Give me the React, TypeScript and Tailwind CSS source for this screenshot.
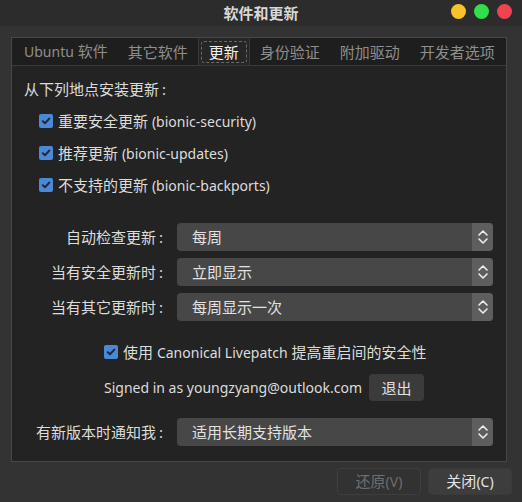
import React from "react";

// Latin runs are a touch smaller than the CJK glyphs in the reference
const L = ({ children }: { children: React.ReactNode }) => <span className="text-[14px]">{children}</span>;

const Check = () => (
    <span className="flex h-[14px] w-[14px] shrink-0 items-center justify-center rounded-[2px] bg-[#4a89d8]">
        <svg width="10" height="10" viewBox="0 0 10 10" fill="none">
            <path d="M1.8 5.2 L4 7.3 L8.3 2.6" stroke="#1f2a38" strokeWidth="2" strokeLinecap="round" strokeLinejoin="round" />
        </svg>
    </span>
);

const Combo = ({ value }: { value: string }) => (
    <div className="flex h-[28px] w-[316px] items-stretch overflow-hidden rounded-[4px] bg-[#474747]">
        <span className="flex flex-1 items-center pl-[15px] text-[#e2e2e2]">{value}</span>
        <span className="flex w-[21px] items-center justify-center bg-[#5e5e5e]">
            <svg width="12" height="20" viewBox="0 0 12 20" fill="none">
                <path d="M2 8 L6 4 L10 8" stroke="#eeeeee" strokeWidth="1.6" strokeLinecap="round" strokeLinejoin="round" />
                <path d="M2 12 L6 16 L10 12" stroke="#eeeeee" strokeWidth="1.6" strokeLinecap="round" strokeLinejoin="round" />
            </svg>
        </span>
    </div>
);

const Row = ({ label, value }: { label: string; value: string }) => (
    <div className="flex items-center gap-[14px]">
        <span className="w-[139px] text-right text-[#dcdcdc]">{label}<span className="pl-[3px]">:</span></span>
        <Combo value={value} />
    </div>
);

const tabs: { key: string; node: React.ReactNode }[] = [
    { key: "ubuntu", node: <span><L>Ubuntu</L> 软件</span> },
    { key: "other", node: "其它软件" },
    { key: "updates", node: "更新" },
    { key: "auth", node: "身份验证" },
    { key: "drivers", node: "附加驱动" },
    { key: "dev", node: "开发者选项" },
];

const sources = [
    ["重要安全更新", "(bionic-security)"],
    ["推荐更新", "(bionic-updates)"],
    ["不支持的更新", "(bionic-backports)"],
];

export default function App() {
    return (
        <div className="flex h-[502px] w-[522px] flex-col bg-[#333333] font-['Noto_Sans','Noto_Sans_CJK_SC',sans-serif] text-[15px] leading-[18px] text-[#dcdcdc]">
            {/* title bar */}
            <div className="relative flex h-[26px] shrink-0 items-center justify-center bg-[#2c2c2c]">
                <span className="text-[15px] font-bold text-[#d8d8d8]">软件和更新</span>
                <div className="absolute right-[10px] top-[4px] flex gap-[8px]">
                    <span className="h-[15px] w-[15px] rounded-full bg-[#f8c22d]" />
                    <span className="h-[15px] w-[15px] rounded-full bg-[#31de4b]" />
                    <span className="h-[15px] w-[15px] rounded-full bg-[#ef444f]" />
                </div>
            </div>

            {/* notebook */}
            <div className="mx-[11px] mt-[11px] flex h-[425px] w-[496px] flex-col border border-[#474747] bg-[#232323]">
                <div className="flex h-[28px] shrink-0 items-stretch overflow-hidden whitespace-nowrap border-b border-[#3a3a3a] bg-[#1e1e1e] pl-[2px]">
                    {tabs.map((t) =>
                        t.key === "updates" ? (
                            <div key={t.key} className="-mb-px flex shrink-0 items-center border-x border-[#3a3a3a] bg-[#262626] px-[2px]">
                                <span className="rounded-[3px] border border-dashed border-[#6a6a6a] px-[7px] leading-[20px] text-[#f0f0f0]">{t.node}</span>
                            </div>
                        ) : (
                            <div key={t.key} className="flex shrink-0 items-center px-[10px] text-[#8e8e8e]">{t.node}</div>
                        )
                    )}
                </div>

                <div className="flex flex-col px-[12px] pt-[14px]">
                    <div className="h-[18px]">从下列地点安装更新<span className="pl-[3px]">:</span></div>
                    <div className="mt-[14px] flex flex-col gap-[14px] pl-[15px]">
                        {sources.map(([zh, en]) => (
                            <div key={en} className="flex h-[18px] items-center gap-[5px]">
                                <Check />
                                <span>{zh} <L>{en}</L></span>
                            </div>
                        ))}
                    </div>

                    <div className="mt-[29px] flex flex-col gap-[7px]">
                        <Row label="自动检查更新" value="每周" />
                        <Row label="当有安全更新时" value="立即显示" />
                        <Row label="当有其它更新时" value="每周显示一次" />
                    </div>

                    <div className="mt-[22px] flex flex-col pl-[80px]">
                        <div className="flex h-[18px] items-center gap-[5px]">
                            <Check />
                            <span>使用 <L>Canonical Livepatch</L> 提高重启间的安全性</span>
                        </div>
                        <div className="mt-[13px] flex items-center gap-[7px]">
                            <L>Signed in as youngzyang@outlook.com</L>
                            <button className="h-[27px] w-[55px] rounded-[4px] bg-[#3b3b3b] text-[#e2e2e2]">退出</button>
                        </div>
                    </div>

                    <div className="mt-[17px]">
                        <Row label="有新版本时通知我" value="适用长期支持版本" />
                    </div>
                </div>
            </div>

            {/* footer */}
            <div className="mt-[6px] flex justify-end gap-[7px] pr-[10px]">
                <button disabled className="h-[27px] w-[84px] rounded-[4px] border border-[#3e3e3e] bg-[#323232] text-[#6e6e6e]">还原<L>(V)</L></button>
                <button className="h-[27px] w-[84px] rounded-[4px] border border-[#3a3a3a] bg-[#3d3d3d] text-[#e4e4e4]">关闭<L>(C)</L></button>
            </div>
        </div>
    );
}
